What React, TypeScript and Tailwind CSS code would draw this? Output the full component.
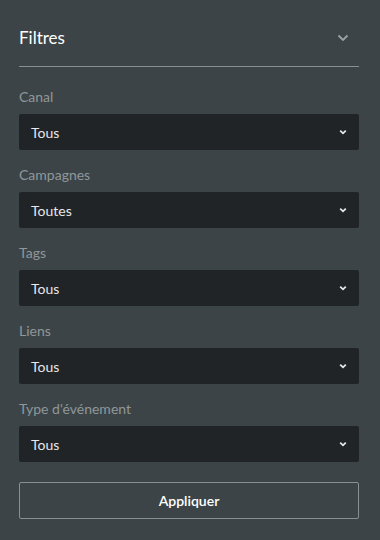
import React from "react";

const filters = [
  { label: "Canal", value: "Tous" },
  { label: "Campagnes", value: "Toutes" },
  { label: "Tags", value: "Tous" },
  { label: "Liens", value: "Tous" },
  { label: "Type d'événement", value: "Tous" },
];

function SmallChevron() {
  return (
    <svg width="8" height="6" viewBox="0 0 8 6" className="text-gray-200">
      <path d="M1.2 1.6 L4 4.3 L6.8 1.6" fill="none" stroke="currentColor" strokeWidth="1.8" />
    </svg>
  );
}

function App() {
  return (
    <div
      className="w-[380px] h-[540px] bg-[#3d4447] pl-[19px] pr-[21px]"
      style={{ fontFamily: "Lato, 'Open Sans', sans-serif" }}
    >
      <div className="flex items-center justify-between pt-[26px] pb-[16px] border-b border-[#8a8f92]">
        <span className="text-[17px] leading-[24px] text-white">Filtres</span>
        <svg width="12" height="8" viewBox="0 0 12 8" className="mr-[10px] text-[#9ca2a5]">
          <path d="M1.5 1.5 L6 6 L10.5 1.5" fill="none" stroke="currentColor" strokeWidth="1.8" />
        </svg>
      </div>
      <div className="pt-[20px]">
        {filters.map((f) => (
          <div key={f.label} className="mb-[15px]">
            <div className="text-[14px] leading-[20px] text-[#8f979a] mb-[7px]">{f.label}</div>
            <div className="h-9 rounded-[2px] bg-[#212427] flex items-center justify-between pl-[12px] pr-[12px]">
              <span className="text-[14px] text-[#e6e8e9]">{f.value}</span>
              <SmallChevron />
            </div>
          </div>
        ))}
        <button className="w-full h-[37px] mt-[5px] border border-[#8a8f92] rounded-[2px] text-[14px] font-semibold text-white">
          Appliquer
        </button>
      </div>
    </div>
  );
}

export default App;
